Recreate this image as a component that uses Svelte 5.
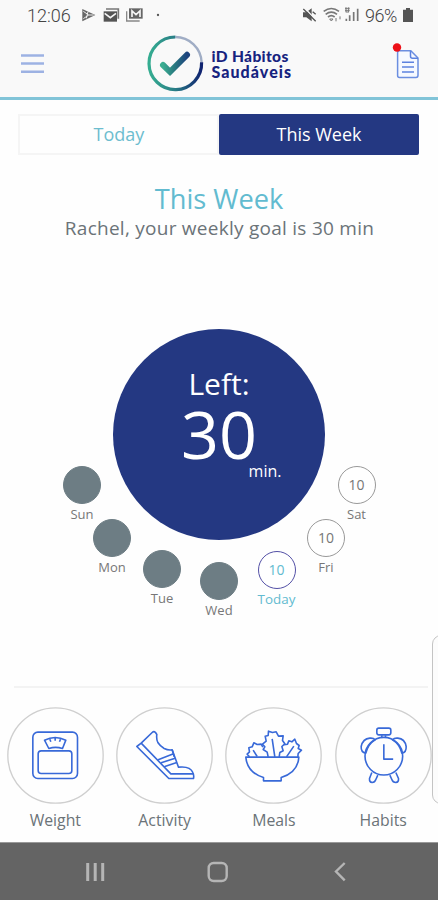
<script>
  const days = [
    { name: 'Sun', x: 82, y: 485, done: true },
    { name: 'Mon', x: 112, y: 538, done: true },
    { name: 'Tue', x: 162, y: 568.5, done: true },
    { name: 'Wed', x: 219, y: 581, done: true },
    { name: 'Today', x: 276.5, y: 570, today: true },
    { name: 'Fri', x: 326, y: 538 },
    { name: 'Sat', x: 356.5, y: 485 }
  ];
  const dialTop = 250;
</script>

<div class="screen">
  <header>
    <div class="status">
      <span class="time">12:06</span>
      <svg class="notes" viewBox="240 15 246 60" width="82" height="20">
        <path d="M247 27L286 45L247 64Z" fill="#666" />
        <path d="M250 34l16 11-16 11M266 45h15M264 35l-5 20" stroke="#eee" stroke-width="3" fill="none" />
        <path d="M318 27h37v29" fill="none" stroke="#777" stroke-width="5" />
        <path d="M311 34h40v31h-40z" fill="#555" />
        <path d="M314 40l17 13 17-13" fill="none" stroke="#f5f5f5" stroke-width="5" />
        <path d="M380 34v29h39" fill="none" stroke="#888" stroke-width="4" />
        <path d="M387 25h41v31h-41z" fill="#666" />
        <path d="M396 51V33l12 11 12-11v18" fill="none" stroke="#f5f5f5" stroke-width="5" />
        <circle cx="474" cy="45" r="3.5" fill="#555" />
      </svg>
      <svg class="signals" viewBox="250 15 174 60" width="58" height="20">
        <path d="M253 37h10l16-12v39l-16-12h-10z" fill="#555" />
        <path d="M258 24l36 38" stroke="#f9f9f9" stroke-width="4" />
        <path d="M254 27l37 37M282 35l9 8" stroke="#555" stroke-width="4" />
        <g fill="none" stroke="#777" stroke-width="5">
          <path d="M315 34q23-17 46 0M321 43q17-13 34 0M328 51q10-8 20 0" />
          <path d="M333 57h10l-5 6zM352 54v10M364 49v9" stroke-width="3" />
          <path d="M383 63v-7M393 63V46M405 63V36M417 63V26" />
          <path d="M379 25h14M379 31h14M381 36h10M382 22v14M390 22v14" stroke-width="3" />
        </g>
      </svg>
      <span class="percent">96%</span>
      <svg class="battery" viewBox="0 0 10 14" width="10" height="14">
        <path d="M3 0h4v1.7h3V14H0V1.7h3z" fill="#555" />
      </svg>
    </div>
    <div class="bar">
      <svg class="menu" viewBox="0 0 24 22" width="24" height="22">
        <path d="M0 2.5h23M0 10.5h23M0 18.8h23" stroke="#9db2e3" stroke-width="2.4" />
      </svg>
      <div class="brand">
        <svg viewBox="0 0 58 58" width="58" height="58">
          <defs>
            <linearGradient id="ring" x1="0" y1="0" x2="1" y2="0">
              <stop offset="0" stop-color="#35ad91" />
              <stop offset=".5" stop-color="#297d86" />
              <stop offset="1" stop-color="#102270" />
            </linearGradient>
            <linearGradient id="tick" x1="0" y1="0" x2="1" y2="0">
              <stop offset="0" stop-color="#3bad91" />
              <stop offset=".45" stop-color="#297c80" />
              <stop offset="1" stop-color="#1d437e" />
            </linearGradient>
          </defs>
          <path d="M29.3 3A26.3 26.3 0 0 1 55.6 28.3" fill="none" stroke="#a0adc5" stroke-width="2.4" />
          <path d="M29.3 3A26.3 26.3 0 1 0 55.6 28.3" fill="none" stroke="url(#ring)" stroke-width="3.2" />
          <path d="M17 31L24 37.8L41 20.8" fill="none" stroke="url(#tick)" stroke-width="6" stroke-linecap="round" />
        </svg>
        <div class="name"><span class="l1">iD Hábitos</span><span class="l2">Saudáveis</span></div>
      </div>
      <svg class="doc" viewBox="0 0 30 38" width="30" height="38">
        <path d="M5.6 9.5Q5.6 7.8 7.3 7.8H18.8L26 15V32.3Q26 34.5 24 34.5H7.5Q5.6 34.5 5.6 32.5Z" fill="#f6f9ff" stroke="#6b8ee0" stroke-width="1.5" />
        <path d="M18.5 8v5.2q0 2 2 2H26M10 19.3h12M10 24h12M10 29h12" fill="none" stroke="#5d82df" stroke-width="1.5" />
        <circle cx="5" cy="4.5" r="4.2" fill="#ed1018" />
      </svg>
    </div>
  </header>

  <div class="tabs">
    <div class="tab">Today</div>
    <div class="tab active">This Week</div>
  </div>

  <div class="intro">
    <h1>This Week</h1>
    <p>Rachel, your weekly goal is 30 min</p>
  </div>

  <main>
    <div class="dial">
      <span class="left">Left:</span>
      <span class="value">30</span>
      <span class="unit">min.</span>
    </div>
    {#each days as d}
      <div class="day" class:today={d.today} class:done={d.done} style="left:{d.x}px;top:{d.y - dialTop}px">
        <div class="dot">{d.done ? '' : '10'}</div>
        <span>{d.name}</span>
      </div>
    {/each}
  </main>

  <nav class="tiles">
    <div class="tile">
      <svg viewBox="20.5 81.5 291 291" width="97" height="97">
        <circle class="rim" cx="166" cy="227" r="143" />
        <rect x="98" y="157" width="134" height="139" rx="15" />
        <rect x="114" y="213" width="101" height="68" rx="9" />
        <path d="M133 181Q165 165 197 181L187 206Q166 199 146 206ZM149 178l3 8M165 174v9M181 178l-3 8" />
      </svg>
      <span>Weight</span>
    </div>
    <div class="tile">
      <svg viewBox="347.5 81.5 291 291" width="97" height="97">
        <circle class="rim" cx="493" cy="227" r="143" />
        <path d="M410 200L423 190L456 158Q461 153 466 158L470 164Q468 178 473 188Q480 199 492 206Q504 212 516 210L535 262Q570 258 578 278Q582 286 580 296H506L410 200Z" />
        <path d="M423 190L512 282H579M474 240L520 222M483 249L525 235M494 260L530 248M516 210L522 231" />
      </svg>
      <span>Activity</span>
    </div>
    <div class="tile">
      <svg viewBox="19.5 260.5 291 291" width="97" height="97">
        <circle class="rim" cx="165" cy="406" r="143" />
        <path d="M82 411H241Q238 457 188 472V482H135V472Q86 457 82 411Z" />
        <path d="M93 410L86 402L93 395L91 383L101 380L106 368L116 373L128 372L133 381" />
        <path d="M149 410L146 396L134 388L139 380L132 372L143 363L140 348L149 346L150 333L162 337L173 335L180 348L194 347L192 361L199 371L190 379L194 392L184 397L182 410" />
        <path d="M197 374L207 372L211 362L220 365L229 357L234 370L242 376L239 385L249 390L239 400L238 410" />
        <path d="M161 356L169 410M104 390L116 409M226 378L204 410" />
      </svg>
      <span>Meals</span>
    </div>
    <div class="tile">
      <svg viewBox="347.5 260.5 291 291" width="97" height="97">
        <circle class="rim" cx="493" cy="406" r="143" />
        <circle cx="494" cy="408" r="56.5" />
        <rect x="473" y="324" width="42" height="20" rx="6" />
        <path d="M488 345v8M499 345v8M494 372V417H522" />
        <path d="M440 399Q425 397 426 379Q431 356 452 354Q463 353 468 359Q447 371 440 399ZM548 399Q562 397 561 379Q557 356 536 354Q525 353 520 359Q541 371 548 399Z" />
        <path d="M458 457L451 475Q450 486 459 487Q467 487 470 478L476 465M530 457L538 475Q539 486 530 487Q521 487 518 478L512 465" />
      </svg>
      <span>Habits</span>
    </div>
    <div class="drawer"></div>
  </nav>

  <footer>
    <svg viewBox="0 0 438 57" width="438" height="57">
      <g fill="none" stroke="#b5b5b5">
        <path d="M87.7 20v18M95.2 20v18M102.7 20v18" stroke-width="3" />
        <rect x="208.7" y="20" width="18" height="18" rx="5" stroke-width="2.4" />
        <path d="M344.7 20L336 28.5L344.7 37.3" stroke-width="2.4" />
      </g>
    </svg>
  </footer>
</div>

<style>
  .screen {
    width: 438px;
    height: 900px;
    display: flex;
    flex-direction: column;
    overflow: hidden;
    background: #fefefe;
    color: #6b7378;
    font-family: 'Open Sans', sans-serif;
  }
  svg { display: block; flex: none; }
  header {
    height: 97px;
    flex: none;
    background: #f9f9f9;
    border-bottom: 3px solid #81c4d8;
  }
  .status {
    display: flex;
    height: 30px;
    font-family: Roboto, sans-serif;
    font-weight: 300;
    font-size: 18px;
    line-height: 31px;
    color: #444;
    padding-left: 27px;
  }
  .time { width: 53px; }
  .notes { margin-top: 5px; }
  .signals { margin: 5px 5px 0 140px; }
  .percent { width: 38px; letter-spacing: -.5px; }
  .battery { margin-top: 8px; }
  .bar { display: flex; height: 67px; }
  .menu { margin: 23px 0 0 21px; }
  .brand { display: flex; margin-left: 101px; width: 245.5px; padding-top: 4px; }
  .name {
    display: flex;
    flex-direction: column;
    margin: 14px 0 0 7.5px;
    font: 900 15.5px/16px Lato, sans-serif;
    color: #16237f;
    white-space: nowrap;
  }
  .l1 { letter-spacing: .35px; }
  .l2 { font-size: 16px; letter-spacing: 1.05px; }
  .doc { margin-top: 12.5px; }
  .tabs {
    display: flex;
    flex: none;
    height: 41px;
    margin: 14px 19px 0 18px;
    font-size: 18px;
    text-align: center;
  }
  .tab {
    width: 201px;
    box-sizing: border-box;
    border: 2px solid #f5f5f5;
    line-height: 37px;
    padding-left: 1px;
    color: #6dbdcf;
  }
  .tab.active {
    width: 200px;
    border: 0;
    padding: 0;
    border-radius: 2px;
    background: #243882;
    color: #fff;
    line-height: 41px;
  }
  .intro { height: 95px; flex: none; text-align: center; white-space: nowrap; }
  h1 { margin: 26px 0 0; font-weight: 400; font-size: 27.2px; line-height: 35px; color: #62bbd0; }
  p { margin: 0 0 0 1px; font-size: 19px; letter-spacing: .26px; line-height: 24px; }
  main { position: relative; display: flow-root; height: 436px; flex: none; }
  .dial {
    width: 212px;
    height: 211px;
    margin: 79px auto 0;
    border-radius: 50%;
    background: #243882;
    color: #fff;
    display: flex;
    flex-direction: column;
    align-items: center;
  }
  .left { font-size: 30px; line-height: 36px; margin-top: 37px; }
  .value { font-size: 66.5px; line-height: 68px; margin-top: -3px; }
  .unit { font-size: 16px; line-height: 20px; margin: -6px 0 0 92px; }
  .day {
    position: absolute;
    width: 60px;
    margin: -19px 0 0 -30px;
    display: flex;
    flex-direction: column;
    align-items: center;
    font-size: 13px;
    line-height: 17px;
    color: #777;
  }
  .dot {
    width: 38px;
    height: 38px;
    box-sizing: border-box;
    margin-bottom: 2px;
    border: 1px solid #999;
    border-radius: 50%;
    background: #fff;
    text-align: center;
    font-size: 14px;
    line-height: 36px;
  }
  .done .dot { background: #6d7d84; border-color: #6d7d84; }
  .today { color: #62bbd0; font-size: 13.4px; }
  .today .dot { border: 1.5px solid #5350a6; }
  .tiles {
    position: relative;
    flex: none;
    height: 155px;
    display: grid;
    grid-template-columns: repeat(4, 109.3px);
    padding-left: .7px;
  }
  .tiles::before {
    content: '';
    position: absolute;
    left: 14px;
    right: 10px;
    top: 0;
    height: 2px;
    background: #f3f3f3;
  }
  .tile {
    display: flex;
    flex-direction: column;
    align-items: center;
    padding-top: 21px;
    font-size: 15.8px;
    line-height: 22px;
  }
  .tile span { margin-top: 4.5px; }
  .tile svg { fill: none; stroke: #3869d8; stroke-width: 4.8; stroke-linejoin: round; }
  .tile .rim { stroke: #cfcfcf; stroke-width: 4; }
  .drawer {
    position: absolute;
    left: 432px;
    top: -51px;
    width: 20px;
    height: 169px;
    box-sizing: border-box;
    border: 1.5px solid #c4c4c4;
    border-radius: 9px;
    background: #fcfcfc;
  }
  footer {
    height: 58px;
    flex: none;
    box-sizing: border-box;
    margin-top: auto;
    border-top: 1px solid #999;
    background: #646464;
  }
</style>
